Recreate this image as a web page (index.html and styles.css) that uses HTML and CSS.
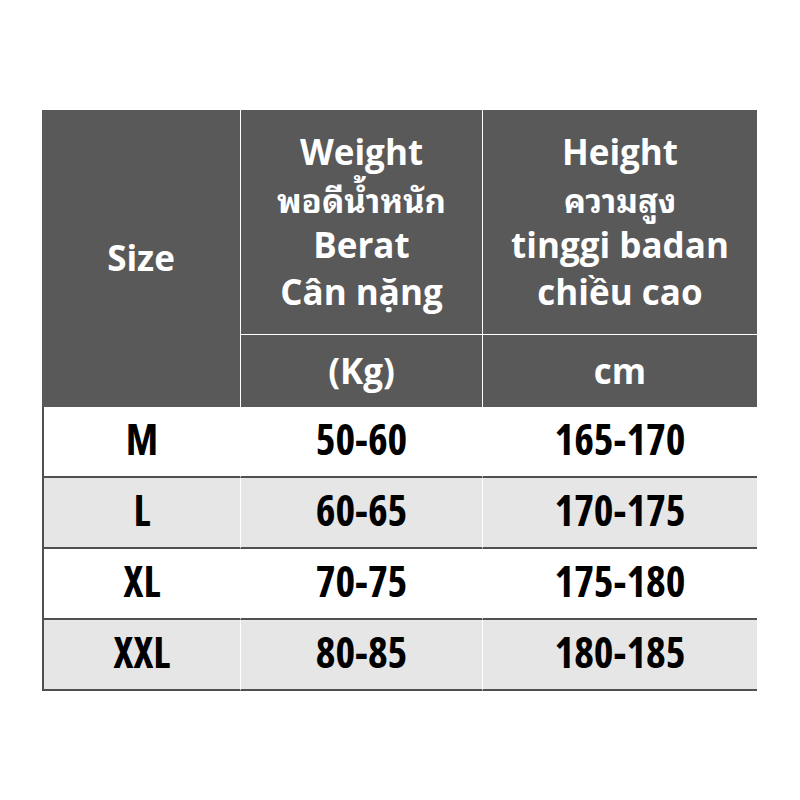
FILE: index.html
```html
<!DOCTYPE html>
<html lang="en">
<head>
<meta charset="utf-8">
<title>Size chart</title>
<link rel="stylesheet" href="styles.css">
</head>
<body>
<div class="chart">
  <div class="hcell size-head">Size</div>
  <div class="hcell sep top">
    <span>Weight</span>
    <span class="thai">พอดีน้ำหนัก</span>
    <span>Berat</span>
    <span>Cân nặng</span>
  </div>
  <div class="hcell sep top">
    <span>Height</span>
    <span class="thai">ความสูง</span>
    <span>tinggi badan</span>
    <span>chiều cao</span>
  </div>
  <div class="hcell sep unit">(Kg)</div>
  <div class="hcell sep unit">cm</div>

  <div class="bcell first">M</div>
  <div class="bcell">50-60</div>
  <div class="bcell">165-170</div>

  <div class="bcell first alt">L</div>
  <div class="bcell alt">60-65</div>
  <div class="bcell alt">170-175</div>

  <div class="bcell first">XL</div>
  <div class="bcell">70-75</div>
  <div class="bcell">175-180</div>

  <div class="bcell first alt">XXL</div>
  <div class="bcell alt">80-85</div>
  <div class="bcell alt">180-185</div>
</div>
</body>
</html>
```

FILE: styles.css
```css
html, body {
  margin: 0;
  padding: 0;
  background: #ffffff;
}

body {
  padding: 110px 0 0 42px;
  font-family: "Open Sans", "Noto Sans", "Noto Sans Thai Looped", "Noto Sans Thai", "DejaVu Sans", sans-serif;
  font-weight: 700;
}

.chart {
  display: grid;
  grid-template-columns: 198px 242px 275px;
  grid-template-rows: 225px 72px repeat(4, 71px);
  width: 715px;
}

.hcell {
  box-sizing: border-box;
  background: #595959;
  color: #ffffff;
  display: flex;
  flex-direction: column;
  align-items: center;
  justify-content: center;
  font-size: 35px;
  line-height: 46.5px;
}

.size-head {
  grid-row: 1 / span 2;
}

.sep {
  border-left: 1px solid #ffffff;
}

.top {
  border-bottom: 1px solid #ffffff;
}

.thai {
  font-family: "Noto Sans Thai Looped", "Noto Sans Thai", "Loma", "Garuda", "Noto Sans", sans-serif;
  font-size: 33px;
}

.bcell {
  box-sizing: border-box;
  display: flex;
  align-items: center;
  justify-content: center;
  border-left: 1px solid #ffffff;
  border-bottom: 2px solid #505050;
  color: #000000;
  font-size: 42px;
  font-stretch: 78%;
  line-height: 1;
  padding-bottom: 5px;
}

.bcell.first {
  border-left: 2px solid #505050;
}

.alt {
  background: #e6e6e6;
}
```
